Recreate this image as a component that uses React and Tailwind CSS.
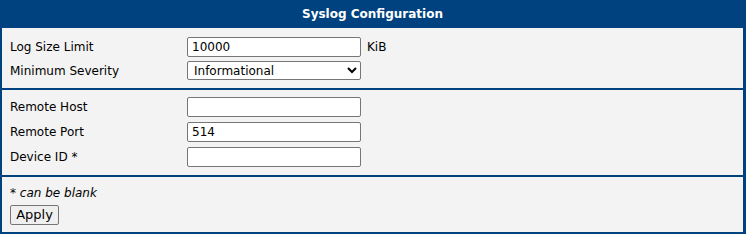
export default function App() {
  const font = { fontFamily: '"DejaVu Sans", sans-serif' };
  return (
    <div className="w-[746px] h-[236px] bg-white text-[12px] text-black" style={font}>
      <div className="h-[234px] flex flex-col border-l-2 border-r-[3px] border-b-2 border-[#00427f] bg-[#f3f3f3]">
        <div className="h-[28px] bg-[#00427f] text-white font-bold text-[12px] flex items-center justify-center">Syslog Configuration</div>
        <div className="flex flex-col gap-[4px] pt-[9px] pb-[8px] pl-[8px]">
          <div className="flex items-center h-[20px]">
            <span className="w-[177px]">Log Size Limit</span>
            <input className="w-[174px] h-[20px] border border-[#767676] rounded-[2px] bg-white px-[4px] outline-none" defaultValue="10000" />
            <span className="ml-[6px]">KiB</span>
          </div>
          <div className="flex items-center h-[19px]">
            <span className="w-[177px]">Minimum Severity</span>
            <select className="w-[174px] h-[19px] border border-[#767676] rounded-[2px] bg-white px-[2px]">
              <option>Informational</option>
            </select>
          </div>
        </div>
        <div className="h-[2px] bg-[#00427f]" />
        <div className="flex flex-col gap-[5px] pt-[7px] pb-[8px] pl-[8px]">
          <div className="flex items-center h-[20px]">
            <span className="w-[177px]">Remote Host</span>
            <input className="w-[174px] h-[20px] border border-[#767676] rounded-[2px] bg-white px-[4px] outline-none" defaultValue="" />
          </div>
          <div className="flex items-center h-[20px]">
            <span className="w-[177px]">Remote Port</span>
            <input className="w-[174px] h-[20px] border border-[#767676] rounded-[2px] bg-white px-[4px] outline-none" defaultValue="514" />
          </div>
          <div className="flex items-center h-[20px]">
            <span className="w-[177px]">Device ID *</span>
            <input className="w-[174px] h-[20px] border border-[#767676] rounded-[2px] bg-white px-[4px] outline-none" defaultValue="" />
          </div>
        </div>
        <div className="h-[2px] bg-[#00427f]" />
        <div className="flex flex-col items-start pl-[8px] pt-[7px]">
          <div className="h-[18px] leading-[18px]">* <i>can be blank</i></div>
          <button className="mt-[3px] w-[49px] h-[20px] border border-[#767676] rounded-[2px] bg-[#efefef] text-[13px] leading-[18px]">Apply</button>
        </div>
      </div>
    </div>
  );
}
